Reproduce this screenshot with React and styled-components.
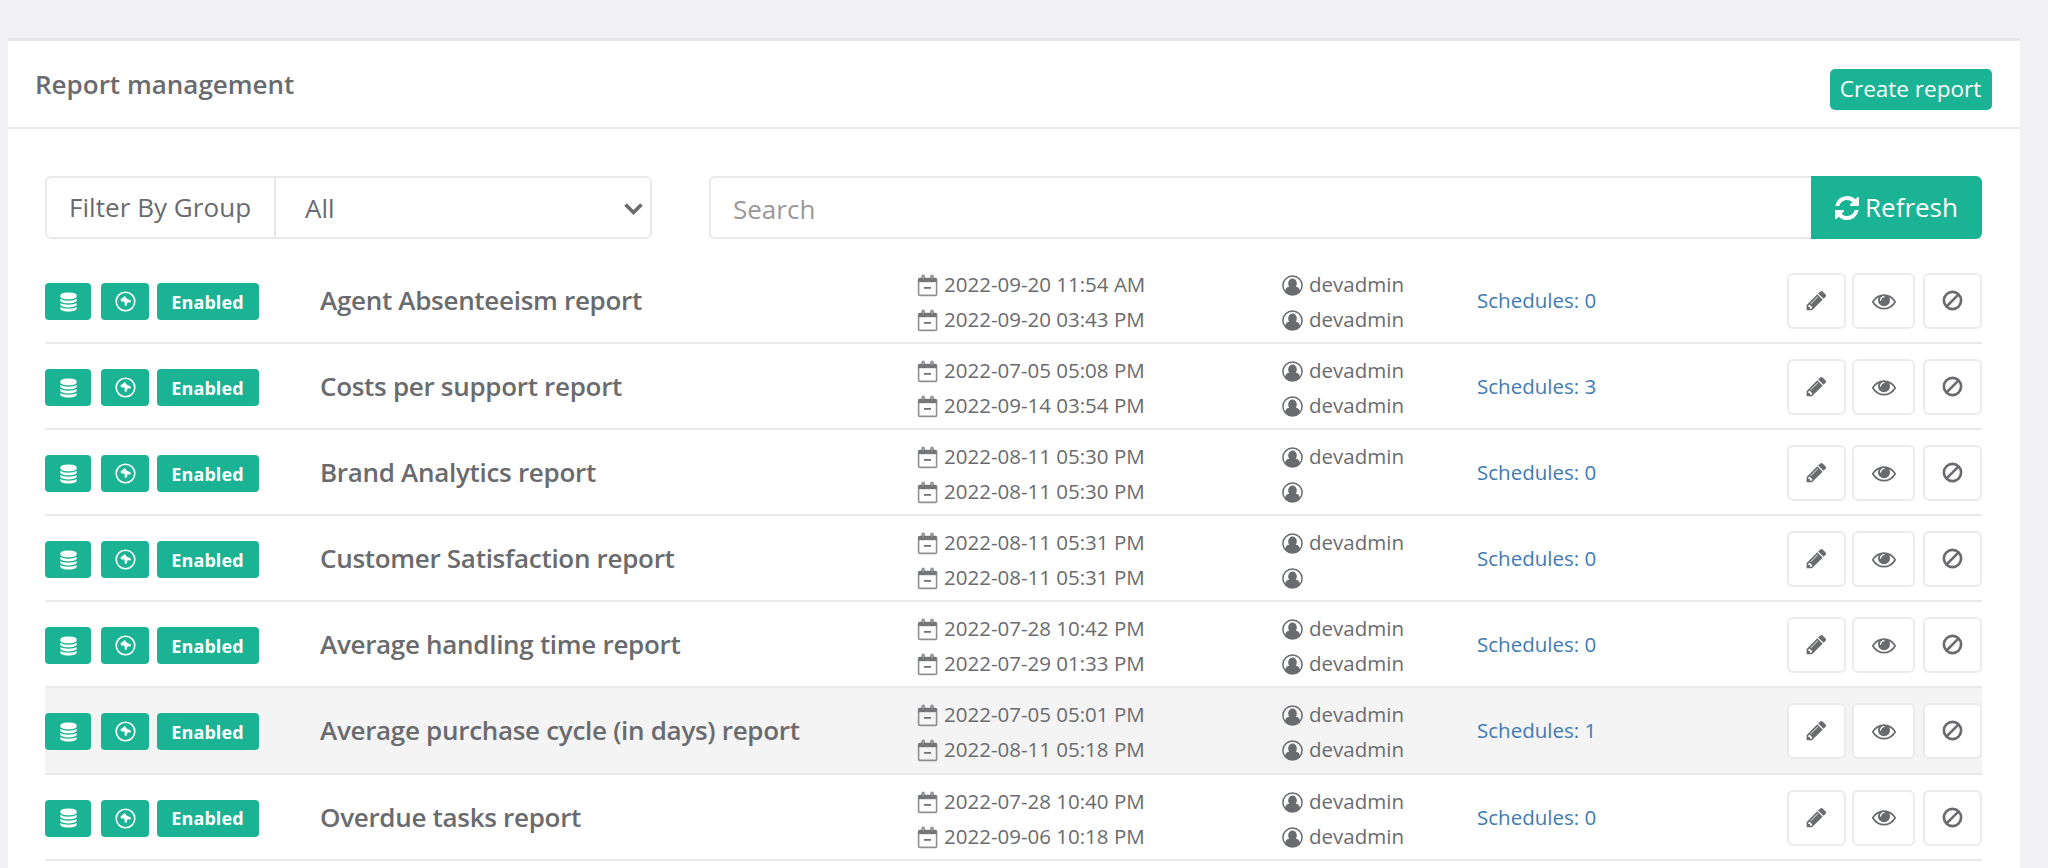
import styled, { createGlobalStyle } from 'styled-components'

const GlobalStyle = createGlobalStyle`
  *{box-sizing:border-box}
  body{margin:0; background:#f2f2f5; color:#696b6e; font-family:"Open Sans", sans-serif; overflow:hidden}
  button,input{font-family:inherit; color:inherit}
`

const Page = styled.main`height:868px; padding:38px 28px 0 8px; overflow:hidden`
const Panel = styled.section`height:900px; background:#fff; border-top:3px solid #e6e7ea`
const PanelHeader = styled.header`
  display:flex; justify-content:space-between; align-items:flex-start; height:88px; padding:28px 28px 0 27px; border-bottom:2px solid #e9ebec;
`
const PanelTitle = styled.h1`margin:-2px 0 0; font-size:26px; line-height:34px; font-weight:600; white-space:nowrap`
const CreateButton = styled.button`
  height:41px; width:162px; padding:0 1px 1px 0; border:0; border-radius:5px; background:#1ab394; color:#fff; font-size:22.5px; line-height:36px; white-space:nowrap;
`
const PanelBody = styled.div`padding:47px 38px 0 37px`

const Toolbar = styled.div`display:flex; gap:57px; height:63px`
const Group = styled.div`
  display:flex; width:607px; flex:none; border:2px solid #e7e9ea; border-radius:6px; font-size:26px; line-height:34px;
`
const GroupLabel = styled.label`width:229px; padding:12px 0 0 22px; border-right:2px solid #e7e9ea; letter-spacing:0.05px; white-space:nowrap`
const Select = styled.div`flex:1; display:flex; justify-content:space-between; padding:13px 6px 0 29px; svg{margin-top:11px}`
const SearchGroup = styled.div`display:flex; flex:1`
const SearchInput = styled.input`
  flex:1; min-width:0; padding:2px 0 0 22px; border:2px solid #e7e9ea; border-right:0; border-radius:6px 0 0 6px; font-size:26px; outline:0; background:#fff;
  &::placeholder{color:#999; opacity:1}
`
const RefreshButton = styled.button`
  display:flex; align-items:center; gap:6px; width:171px; padding:0 0 2px 24px; border:0; border-radius:0 6px 6px 0; background:#1ab394; color:#fff; font-size:26px; white-space:nowrap;
  svg{margin-top:3px}
`

const List = styled.div`margin-top:19px`
const Row = styled.div`
  display:grid; grid-template-columns:275px 597px 365px 195px 1fr auto; height:86.1px; border-bottom:2px solid #e7e9ea; background:${p=>p.$active ? '#f4f4f4' : 'transparent'};
`
const Badges = styled.div`display:flex; padding-top:25px`
const Badge = styled.span`
  display:flex; align-items:center; justify-content:center; width:${p=>p.$width}px; height:37px; margin-right:${p=>p.$gap || 0}px; padding-right:${p=>p.$label ? 1 : 0}px;
  border-radius:4px; background:#1ab394; color:#fff; font-size:18px; font-weight:700; letter-spacing:${p=>p.$label ? '0.1px' : 0};
`
const ReportName = styled.div`padding-top:24px; font-size:26px; line-height:36px; font-weight:600; letter-spacing:-0.3px; white-space:nowrap`
const Lines = styled.div`padding-top:12px`
const Line = styled.div`
  display:flex; align-items:flex-start; gap:6px; height:35px; font-size:20.5px; line-height:28px; white-space:nowrap;
  svg{margin-top:4px}
`
const Schedules = styled.a`padding-top:28px; font-size:20.5px; line-height:28px; color:#3f7ab5; white-space:nowrap`
const Actions = styled.div`grid-column:6; display:flex; padding-top:15px`
const ActionButton = styled.button`
  display:flex; align-items:center; justify-content:center; width:${p=>p.$width}px; height:56px; margin-left:${p=>p.$gap || 0}px; padding:0 0 1px; border:2px solid #e9ebec; border-radius:6px; background:#fff;
`

const glyphs = {
  database: 'M896 768q237 0 443-43t325-127v170q0 69-103 128t-280 93.5-385 34.5-385-34.5-280-93.5-103-128v-170q119 84 325 127t443 43zm0 768q237 0 443-43t325-127v170q0 69-103 128t-280 93.5-385 34.5-385-34.5-280-93.5-103-128v-170q119 84 325 127t443 43zm0-384q237 0 443-43t325-127v170q0 69-103 128t-280 93.5-385 34.5-385-34.5-280-93.5-103-128v-170q119 84 325 127t443 43zm0-1152q208 0 385 34.5t280 93.5 103 128v128q0 69-103 128t-280 93.5-385 34.5-385-34.5-280-93.5-103-128v-128q0-69 103-128t280-93.5 385-34.5z',
  refresh: 'M1639 1056q0 5-1 7-64 268-268 434.5t-478 166.5q-146 0-282.5-55t-243.5-157l-129 129q-19 19-45 19t-45-19-19-45v-448q0-26 19-45t45-19h448q26 0 45 19t19 45-19 45l-137 137q71 66 161 102t187 36q134 0 250-65t186-179q11-17 53-117 8-23 30-23h192q13 0 22.5 9.5t9.5 22.5zm25-800v448q0 26-19 45t-45 19h-448q-26 0-45-19t-19-45 19-45l138-138q-148-137-349-137-134 0-250 65t-186 179q-11 17-53 117-8 23-30 23h-199q-13 0-22.5-9.5t-9.5-22.5v-7q65-268 270-434.5t480-166.5q146 0 284 55.5t245 156.5l130-129q19-19 45-19t45 19 19 45z',
  pencil: 'M491 1536l91-91-235-235-91 91v107h128v128h107zm523-928q0-22-22-22-10 0-17 7l-542 542q-7 7-7 17 0 22 22 22 10 0 17-7l542-542q7-7 7-17zm-54-192l416 416-832 832h-416v-416zm683 96q0 53-37 90l-166 166-416-416 166-165q36-38 90-38 53 0 91 38l235 234q37 39 37 91z',
  eye: 'M1664 960q-152-236-381-353 61 104 61 225 0 185-131.5 316.5t-316.5 131.5-316.5-131.5-131.5-316.5q0-121 61-225-229 117-381 353 133 205 333.5 326.5t434.5 121.5 434.5-121.5 333.5-326.5zm-720-384q0-20-14-34t-34-14q-125 0-214.5 89.5t-89.5 214.5q0 20 14 34t34 14 34-14 14-34q0-86 61-147t147-61q20 0 34-14t14-34zm848 384q0 34-20 69-140 230-376.5 368.5t-499.5 138.5-499.5-139-376.5-368q-20-35-20-69t20-69q140-229 376.5-368t499.5-139 499.5 139 376.5 368q20 35 20 69z',
}

function Glyph({name,box='0 0 1792 1792',width,height}){
  return <svg width={width} height={height} viewBox={box} fill="currentColor" aria-hidden><path d={glyphs[name]} /></svg>
}

function CalendarIcon(){
  return (
    <svg width="21" height="23" viewBox="0 0 21 23" fill="none" stroke="currentColor" aria-hidden>
      <rect x="1.6" y="4.6" width="18" height="16.8" rx="1.2" strokeWidth="1.6" opacity=".75" />
      <path d="M1.500 4.200h18v4H1.500z" fill="currentColor" stroke="none" opacity=".9" />
      <path d="M6.200 2.500v3.500M15 2.500v3.500" strokeWidth="3.8" strokeLinecap="round" opacity=".7" />
      <path d="M6.200 2.800v3.200M15 2.800v3.200" stroke="#fff" strokeWidth="1" opacity=".35" />
      <path d="M7 13.900h7" strokeWidth="1.700" />
    </svg>
  )
}

function UserIcon(){
  return (
    <svg width="21" height="23" viewBox="0 0 21 23" aria-hidden>
      <circle cx="10.5" cy="11.5" r="9.6" fill="none" stroke="currentColor" strokeWidth="1.5" />
      <path d="M3 17.200c.4-3 1.800-4.400 4.400-4.500h6.200c2.600.1 4 1.500 4.400 4.500a9.400 9.400 0 0 1-15 0z" fill="currentColor" />
      <ellipse cx="10.500" cy="9.600" rx="4.300" ry="5" fill="currentColor" />
    </svg>
  )
}

function PinIcon(){
  return (
    <svg width="21" height="21" viewBox="0 0 21 21" fill="none" stroke="currentColor" aria-hidden>
      <circle cx="10.5" cy="10.5" r="9.3" strokeWidth="1.6" />
      <path d="M5.400 8.400 10 5 11.300 7.200 16 9.800 15.600 11.500 12.600 11.300 11.400 15 9.700 14.500 9.500 10.600 6.200 10.400z" fill="currentColor" stroke="none" />
    </svg>
  )
}

function BanIcon(){
  return (
    <svg width="21" height="21" viewBox="0 0 21 21" fill="none" stroke="currentColor" strokeWidth="2.7" aria-hidden>
      <circle cx="10.5" cy="10.5" r="8.6" />
      <path d="M4.600 16.400 16.400 4.600" />
    </svg>
  )
}

const reports = [
  { name:'Agent Absenteeism report', created:'2022-09-20 11:54 AM', updated:'2022-09-20 03:43 PM', updatedBy:'devadmin', schedules:0 },
  { name:'Costs per support report', created:'2022-07-05 05:08 PM', updated:'2022-09-14 03:54 PM', updatedBy:'devadmin', schedules:3 },
  { name:'Brand Analytics report', created:'2022-08-11 05:30 PM', updated:'2022-08-11 05:30 PM', updatedBy:'', schedules:0 },
  { name:'Customer Satisfaction report', created:'2022-08-11 05:31 PM', updated:'2022-08-11 05:31 PM', updatedBy:'', schedules:0 },
  { name:'Average handling time report', created:'2022-07-28 10:42 PM', updated:'2022-07-29 01:33 PM', updatedBy:'devadmin', schedules:0 },
  { name:'Average purchase cycle (in days) report', created:'2022-07-05 05:01 PM', updated:'2022-08-11 05:18 PM', updatedBy:'devadmin', schedules:1, active:true },
  { name:'Overdue tasks report', created:'2022-07-28 10:40 PM', updated:'2022-09-06 10:18 PM', updatedBy:'devadmin', schedules:0 },
]

function ReportRow({report}){
  return (
    <Row $active={report.active}>
      <Badges>
        <Badge $width={46} $gap={10}><Glyph name="database" width={19} height={20} /></Badge>
        <Badge $width={48} $gap={8}><PinIcon /></Badge>
        <Badge $width={102} $label>Enabled</Badge>
      </Badges>
      <ReportName>{report.name}</ReportName>
      <Lines>
        <Line><CalendarIcon />{report.created}</Line>
        <Line><CalendarIcon />{report.updated}</Line>
      </Lines>
      <Lines>
        <Line><UserIcon />devadmin</Line>
        <Line><UserIcon />{report.updatedBy}</Line>
      </Lines>
      <Schedules>Schedules: {report.schedules}</Schedules>
      <Actions>
        <ActionButton $width={59} aria-label="Edit"><Glyph name="pencil" width={23} height={23} /></ActionButton>
        <ActionButton $width={63} $gap={6} aria-label="View"><Glyph name="eye" width={24} height={24} /></ActionButton>
        <ActionButton $width={59} $gap={8} aria-label="Disable"><BanIcon /></ActionButton>
      </Actions>
    </Row>
  )
}

export default function App(){
  return (
    <>
      <GlobalStyle />
      <Page>
        <Panel>
          <PanelHeader>
            <PanelTitle>Report management</PanelTitle>
            <CreateButton>Create report</CreateButton>
          </PanelHeader>
          <PanelBody>
            <Toolbar>
              <Group>
                <GroupLabel>Filter By Group</GroupLabel>
                <Select>
                  All
                  <svg width="21" height="14" viewBox="0 0 21 14" fill="none" stroke="currentColor" strokeWidth="3.6" aria-hidden><path d="M2.500 2.500 10.500 10.500 18.500 2.500" /></svg>
                </Select>
              </Group>
              <SearchGroup>
                <SearchInput placeholder="Search" />
                <RefreshButton><Glyph name="refresh" box="128 128 1536 1536" width={24} height={24} />Refresh</RefreshButton>
              </SearchGroup>
            </Toolbar>
            <List>
              {reports.map(r => <ReportRow key={r.name} report={r} />)}
            </List>
          </PanelBody>
        </Panel>
      </Page>
    </>
  )
}
